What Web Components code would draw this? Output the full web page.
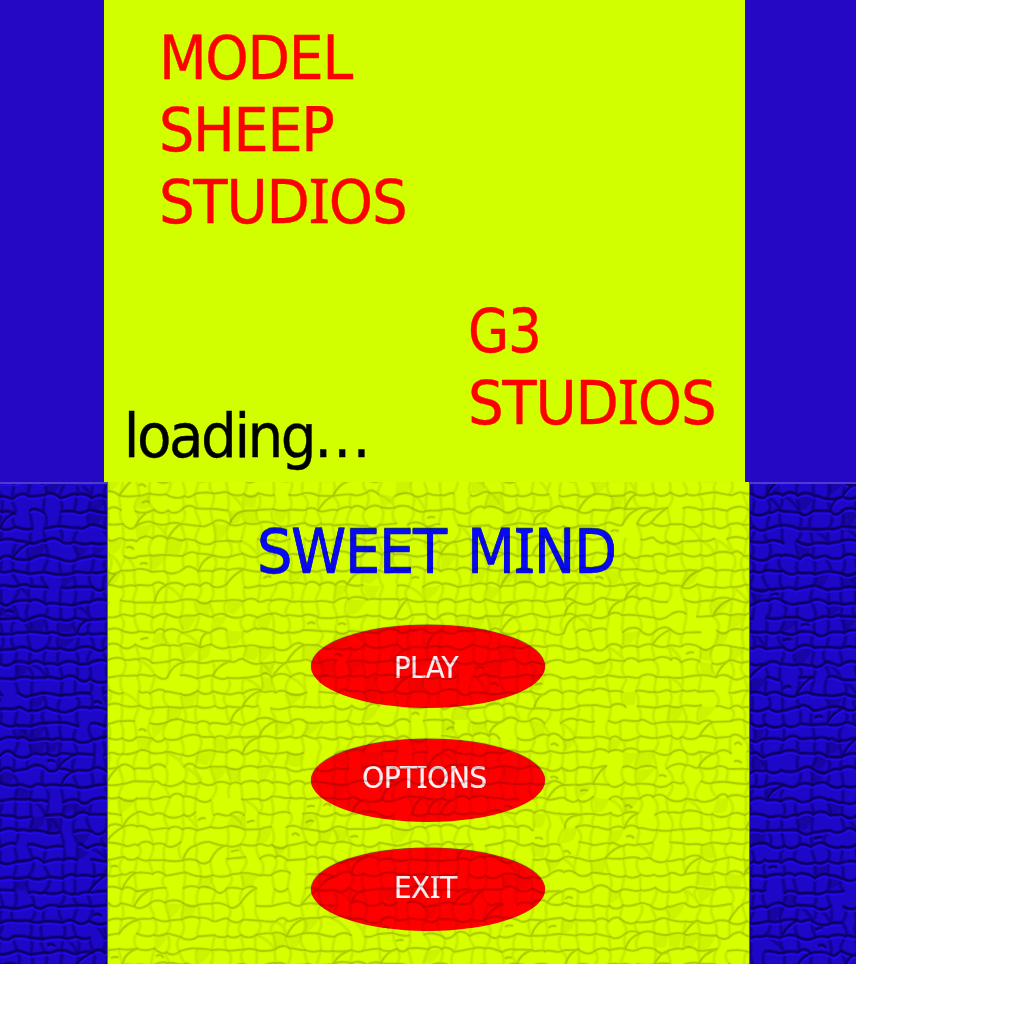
<!DOCTYPE html>
<html lang="en">
<head>
<meta charset="utf-8">
<title>Sweet Mind</title>
<style>
html, body { margin: 0; background: #fff; }
body { font-family: "DejaVu Sans Condensed", "DejaVu Sans", sans-serif; }
</style>
</head>
<body>
<sweet-mind-app></sweet-mind-app>
<script>
const define = (name, html, connected) => customElements.define(name, class extends HTMLElement {
  constructor() { super(); this.attachShadow({ mode: 'open' }).innerHTML = html; }
  connectedCallback() { if (connected) connected.call(this, this.shadowRoot); }
});

define('fit-text', `<style>
:host { display: block; flex: none; }
svg { display: block; overflow: visible; }
text { font-family: "DejaVu Sans Condensed", "DejaVu Sans", sans-serif; font-stretch: condensed; stroke: currentColor; }
.i { font-family: "Noto Sans", sans-serif; }
</style><svg><text></text></svg>`, function (root) {
  const w = +this.getAttribute('w'), size = +(this.getAttribute('size') || 60.4);
  const ls = size * +(this.getAttribute('track') || -0.02), cap = Math.round(size * 0.729), str = this.getAttribute('text');
  const ctx = document.createElement('canvas').getContext('2d');
  const parts = str.split(/(I|\.+)/).filter(Boolean).map(t => {
    const i = t === 'I', dot = t[0] === '.', fs = i ? size * 1.021 : size;
    ctx.font = i ? `${fs}px "Noto Sans", sans-serif` : `${fs}px "DejaVu Sans Condensed", "DejaVu Sans", sans-serif`;
    return { t, i, dot, fs, sp: dot ? size * 0.02 : ls, m: ctx.measureText(t) };
  });
  const first = parts[0].m, last = parts[parts.length - 1];
  let adv = -last.sp;
  parts.forEach(p => adv += p.m.width + p.sp * p.t.length);
  const ink = adv - last.m.width + last.m.actualBoundingBoxRight + first.actualBoundingBoxLeft;
  const k = w / ink;
  const svg = root.querySelector('svg'), t = root.querySelector('text');
  svg.setAttribute('width', w); svg.setAttribute('height', cap);
  t.setAttribute('letter-spacing', ls);
  t.setAttribute('fill', 'currentColor');
  t.setAttribute('font-size', size);
  t.setAttribute('stroke-width', size * .006);
  t.innerHTML = parts.map(p => p.i ? `<tspan class="i" font-size="${p.fs}">I</tspan>`
    : p.dot ? `<tspan letter-spacing="${p.sp}">${p.t}</tspan>` : p.t).join('');
  t.setAttribute('transform', `translate(${first.actualBoundingBoxLeft * k} ${cap}) scale(${k} 1)`);
});

/* Cracked-plaster relief, generated from a seeded jittered grid. */
define('crackle-relief', `<style>
:host { display: block; overflow: hidden; pointer-events: none; }
svg { display: block; width: 100%; height: 100%; filter: blur(.55px); }
path { fill: none; stroke-linecap: round; stroke-linejoin: round; }
.groove { stroke: var(--groove); stroke-width: 3.8; }
.blob { fill: var(--groove); }
.v { stroke: var(--side); stroke-width: 1.6; }
.dark { stroke: var(--dark); stroke-width: 1.9; }
.light { stroke: var(--light); stroke-width: 1.5; }
</style><svg></svg>`, function (root) {
  let s = +this.getAttribute('seed') || 1;
  const W = +this.getAttribute('w'), H = 482, P = 15.2, ox = +this.getAttribute('ox');
  const r = () => { s = (s * 1664525 + 1013904223) >>> 0; return s / 4294967296; };
  const j = a => (r() - 0.5) * a;
  const cols = Math.ceil(W / P) + 3, rows = Math.ceil(H / P) + 3, pts = [];
  for (let y = 0; y < rows; y++) {
    pts.push([]);
    for (let x = 0; x < cols; x++) pts[y].push([ox + (x - 1) * P + j(5.5), -3 + y * P + j(4)]);
  }
  const f = n => n.toFixed(1);
  let hor = '', ver = '', blob = '';
  /* A gently bowed edge between two grid nodes. */
  const edge = (a, b, n, vertical) => {
    const mx = (a[0] + b[0]) / 2, my = (a[1] + b[1]) / 2, o = j(n), o2 = r() < .8 ? o : -o;
    const p = vertical
      ? [a[0] + o, (a[1] + my) / 2, b[0] + o2, (b[1] + my) / 2]
      : [(a[0] + mx) / 2, a[1] + o, (b[0] + mx) / 2, b[1] + o2];
    return `M${f(a[0])} ${f(a[1])}C${p.map(f).join(' ')} ${f(b[0])} ${f(b[1])}`;
  };
  for (let y = 0; y < rows - 1; y++) for (let x = 0; x < cols - 1; x++) {
    const a = pts[y][x], b = pts[y][x + 1], c = pts[y + 1][x], d = pts[y + 1][x + 1];
    if (r() > .07) hor += edge(a, b, 9, false);
    if (r() > .12) ver += edge(a, c, 9, true);
    const z = r(), m = [(a[0] + d[0]) / 2, (a[1] + d[1]) / 2];
    if (z < .05) ver += `M${f(a[0])} ${f(a[1])}Q${f(m[0] + 4)} ${f(m[1] - 2)} ${f(d[0])} ${f(d[1])}`;
    else if (z < .11) hor += `M${f(c[0])} ${f(c[1])}Q${f(m[0] - 3)} ${f(m[1] - 4)} ${f(b[0])} ${f(b[1])}`;
    else if (z < .14) hor += `M${f(m[0] - 4)} ${f(m[1])}q3 ${f(-2 + j(2))} 6 ${f(j(3))}`;
    if (r() < .12) blob += `M${f(a[0])} ${f(a[1])}Q${f(m[0])} ${f(m[1] - 6)} ${f(b[0])} ${f(b[1])}Q${f(m[0] + 5)} ${f(m[1])} ${f(m[0] + 2 + j(7))} ${f(m[1] + 4)}T${f(c[0])} ${f(c[1] - r() * 5)}Z`;
  }
  root.querySelector('svg').innerHTML =
    `<path class="blob" d="${blob}"/><path class="groove" d="${hor + ver}"/><path class="v" d="${ver}"/>` +
    `<path class="light" transform="translate(0 2.9)" d="${hor}"/><path class="dark" d="${hor}"/>`;
});

define('menu-button', `<style>
:host { display: flex; box-sizing: border-box; width: 234px; height: 83px; border-radius: 50%; background: #f00; color: #fff4f8; box-shadow: 0 -0.6px 0.8px #6b4a00; }
</style><slot></slot>`);

define('splash-screen', `<style>
:host { display: grid; grid-template-columns: 104px 641px 111px; height: 482px; background: #2408c4; }
main { grid-column: 2; background: #d2ff00; color: #f00; box-sizing: border-box; padding-top: 35px; }
.stack { display: flex; flex-direction: column; align-items: flex-start; gap: 28px; }
.one { padding-left: 58px; }
.one fit-text:first-child { margin-left: 2px; }
.row { display: flex; align-items: flex-start; margin-top: 85px; padding-left: 24.5px; gap: 106.5px; }
.load { color: #000; margin-top: 105px; }
</style>
<main>
  <div class="stack one"><fit-text text="MODEL" w="189"></fit-text><fit-text text="SHEEP" w="171"></fit-text><fit-text text="STUDIOS" w="243"></fit-text></div>
  <div class="row"><fit-text class="load" text="loading..." track="-0.04" w="236"></fit-text>
  <div class="stack"><fit-text text="G3" w="67.5"></fit-text><fit-text text="STUDIOS" w="243"></fit-text></div></div>
</main>`);

define('menu-screen', `<style>
:host { display: grid; grid-template-columns: 108px 641px 107px; height: 482px; overflow: hidden; background: #1d08c8; }
.side { --groove: rgba(20,4,140,.6); --side: rgba(16,0,112,.45); --dark: rgba(14,0,78,.82); --light: rgba(36,12,244,.85); border-top: 2px solid #4e3cd0; height: 480px; }
.left { border-right: 1px solid #5f6a60; }
.right { border-left: 1px solid #5a6460; }
main { position: relative; display: flex; flex-direction: column; background: #d6ff00; height: 482px; }
.title { display: flex; gap: 23.5px; padding: 47px 0 0 152px; margin-bottom: 52px; color: #0808fa; filter: drop-shadow(0 -0.5px 0.5px #123a50); }
menu-button { margin-left: 203px; }
.o { margin-top: 31px; } .e { margin-top: 26px; }
.play { margin: 31px 0 0 84.5px; } .opt { margin: 27px 0 0 51.5px; } .exit { margin: 28px 0 0 84.5px; }
.over { position: absolute; inset: 0; mix-blend-mode: multiply; --groove: rgba(0,0,0,.045); --side: rgba(0,0,0,.045); --dark: rgba(0,0,0,.155); --light: transparent; }
</style>
<crackle-relief class="side left" seed="7" w="108" ox="0"></crackle-relief>
<main>
  <div class="title"><fit-text text="SWEET" w="188"></fit-text><fit-text text="MIND" w="142"></fit-text></div>
  <menu-button><fit-text class="play" text="PLAY" size="30.2" w="63"></fit-text></menu-button>
  <menu-button class="o"><fit-text class="opt" text="OPTIONS" size="30.2" w="123"></fit-text></menu-button>
  <menu-button class="e"><fit-text class="exit" text="EXIT" size="30.2" w="61.5"></fit-text></menu-button>
  <crackle-relief class="over" seed="42" w="641" ox="13.6"></crackle-relief>
</main>
<crackle-relief class="side right" seed="99" w="107" ox="2"></crackle-relief>`);

define('sweet-mind-app', `<style>
:host { display: block; width: 856px; height: 964px; }
</style><splash-screen></splash-screen><menu-screen></menu-screen>`);
</script>
</body>
</html>
